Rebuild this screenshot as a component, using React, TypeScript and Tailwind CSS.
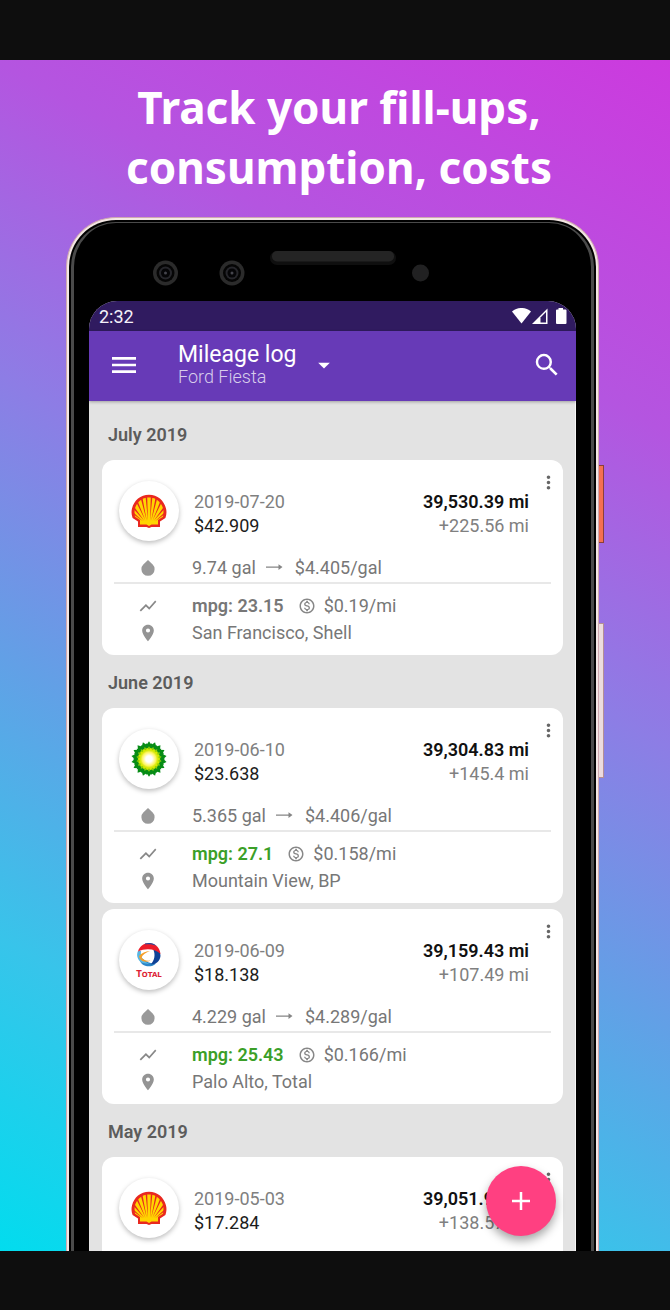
import { MdMenu, MdSearch, MdArrowDropDown, MdMoreVert, MdShowChart, MdPlace, MdOutlineMonetizationOn } from "react-icons/md";

type Brand = "shell" | "bp" | "total";

interface Details {
  volume: string;
  unitPrice: string;
  mpg: string;
  improved: boolean;
  perMile: string;
  place: string;
}

interface FillUp {
  brand: Brand;
  date: string;
  cost: string;
  odometer: string;
  distance: string;
  details?: Details;
}

const months: { label: string; entries: FillUp[] }[] = [
  {
    label: "July 2019",
    entries: [
      {
        brand: "shell", date: "2019-07-20", cost: "$42.909", odometer: "39,530.39 mi", distance: "+225.56 mi",
        details: { volume: "9.74 gal", unitPrice: "$4.405/gal", mpg: "mpg: 23.15", improved: false, perMile: "$0.19/mi", place: "San Francisco, Shell" },
      },
    ],
  },
  {
    label: "June 2019",
    entries: [
      {
        brand: "bp", date: "2019-06-10", cost: "$23.638", odometer: "39,304.83 mi", distance: "+145.4 mi",
        details: { volume: "5.365 gal", unitPrice: "$4.406/gal", mpg: "mpg: 27.1", improved: true, perMile: "$0.158/mi", place: "Mountain View, BP" },
      },
      {
        brand: "total", date: "2019-06-09", cost: "$18.138", odometer: "39,159.43 mi", distance: "+107.49 mi",
        details: { volume: "4.229 gal", unitPrice: "$4.289/gal", mpg: "mpg: 25.43", improved: true, perMile: "$0.166/mi", place: "Palo Alto, Total" },
      },
    ],
  },
  {
    label: "May 2019",
    entries: [
      { brand: "shell", date: "2019-05-03", cost: "$17.284", odometer: "39,051.94 mi", distance: "+138.57 mi" },
    ],
  },
];

function ShellLogo() {
  return (
    <svg viewBox="0 0 36 34" className="h-[34px] w-9" aria-label="Shell" role="img">
      <path d="M7 33V27.5L1.6 24C.4 20.5.2 17.5 1 14.5 3 6.5 9.5.8 18 .8S33 6.5 35 14.5C35.8 17.5 35.6 20.5 34.4 24L29 27.5V33H20.5L18 34 15.5 33Z" fill="#e9281f" />
      <path d="M9 30.500V26L4 22.700C3 18 3.500 14 5.500 10.800 8.300 6.200 12.500 3.500 18 3.500S27.700 6.200 30.500 10.800C32.500 14 33 18 32 22.700L27 26V30.500H20.500L18 32 15.500 30.500Z" fill="#ffd500" />
      <g fill="#e9281f">
        <path d="M17 27 14.600 3H16.200ZM19 27 21.400 3H19.800Z" />
        <path d="M15.800 27 10 5.200 11.600 4.500ZM20.200 27 26 5.200 24.400 4.500Z" />
        <path d="M14.600 27 5.900 9.500 7 8ZM21.400 27 30.100 9.500 29 8Z" />
        <path d="M13.400 27 3 15.500 3.700 13.500ZM22.600 27 33 15.500 32.300 13.500Z" />
        <path d="M12 27.200 3 20.800V19ZM24 27.200 33 20.800V19Z" />
      </g>
    </svg>
  );
}

function Petals({ radius, width, fill, turn }: { radius: number; width: number; fill: string; turn: number }) {
  return (
    <g fill={fill}>
      {Array.from({ length: 18 }, (_, i) => (
        <path key={i} transform={`rotate(${i * 20 + turn})`} d={`M0 0L${-width} ${-radius * 0.76}L0 ${-radius}L${width} ${-radius * 0.76}Z`} />
      ))}
    </g>
  );
}

function BpLogo() {
  return (
    <svg viewBox="-18 -18 36 36" className="size-9" aria-label="BP" role="img">
      <defs>
        <radialGradient id="bp-core">
          <stop offset="0.35" stopColor="#fff" />
          <stop offset="1" stopColor="#fff" stopOpacity="0" />
        </radialGradient>
      </defs>
      <Petals radius={17.8} width={2.9} fill="#078c16" turn={0} />
      <Petals radius={16} width={2.8} fill="#078c16" turn={10} />
      <Petals radius={12.8} width={2.1} fill="#8ccb08" turn={0} />
      <Petals radius={11.5} width={1.9} fill="#d9e900" turn={10} />
      <circle r="7.500" fill="#fff000" />
      <circle r="9" fill="url(#bp-core)" />
    </svg>
  );
}

function TotalLogo() {
  return (
    <svg viewBox="0 0 30 36" className="h-9 w-[30px] overflow-visible" aria-label="Total" role="img">
      <path d="M6 19C8 24.500 17 26.500 22 21.500 18 22 12 20.500 8.500 16.500Z" fill="#2b86c8" />
      <path d="M4 9C2 13 3.500 18 7.500 20.500 10 21.500 13 22 15 21.500 9.500 19.500 6 15 7 9Z" fill="#58b6e3" />
      <path d="M19.500 8C21.500 13 20.500 18.500 16.500 22.500 22 22.500 26 19 26.500 14 26.500 11 25 8.500 23 7Z" fill="#0f4297" />
      <path d="M4 9.500C5.500 4 11 .5 17 1.200 22 2 26 6 26.500 12 22 7 12 5.500 4 9.500Z" fill="#ec1c2a" />
      <path d="M11 1.500C15 .3 20 .8 22.500 4 19 2 15 1.800 11 2.500Z" fill="#1d4fa3" />
      <path d="M5 14C7.500 11 11.500 9.200 16 9 12 10.500 8.500 12.500 7.500 15.500 9 18 12 19 16.500 18.500 12 20.800 6 20 5 14Z" fill="#f5a02a" />
      <text x="15" y="35" textAnchor="middle" fontFamily="DejaVu Sans, sans-serif" fontWeight="700" fontSize="7" fill="#dd1f35">
        <tspan fontSize="8">T</tspan>OTAL
      </text>
    </svg>
  );
}

function BrandLogo({ brand }: { brand: Brand }) {
  if (brand === "shell") return <ShellLogo />;
  if (brand === "bp") return <BpLogo />;
  return <TotalLogo />;
}

function DropIcon() {
  return (
    <svg viewBox="0 0 14 16" className="h-4 w-3.5 fill-[#999999]" aria-hidden="true">
      <path d="M7 0 2.300 4.600A6.600 6.600 0 1 0 11.700 4.600Z" />
    </svg>
  );
}

function ArrowIcon() {
  return (
    <svg viewBox="0 0 17 8" className="h-2 w-[17px]" fill="#858585" aria-hidden="true">
      <path d="M0 2.400H13V3.800H0ZM12.500 .3 16.500 3.100 12.500 5.900Z" />
    </svg>
  );
}

function EntryDetails({ details }: { details: Details }) {
  return (
    <>
      <div className="mx-3 mt-[13px] border-b-2 border-[#e8e8e8] text-[#777777]">
        <div className="flex h-7 items-center">
          <span className="flex w-[68px] justify-center"><DropIcon /></span>
          <span className="ml-2.5">{details.volume}</span>
          <span className="mr-3 ml-2.5"><ArrowIcon /></span>
          <span>{details.unitPrice}</span>
        </div>
      </div>
      <div className="mx-3 mt-2 text-[#777777]">
        <div className="flex h-[27px] items-center">
          <span className="flex w-[68px] justify-center"><MdShowChart size={20} className="text-[#888888]" /></span>
          <span className={details.improved ? "ml-2.5 font-semibold text-[#3b9f28]" : "ml-2.5 font-semibold"}>{details.mpg}</span>
          <MdOutlineMonetizationOn size={18} className="mr-2 ml-[14px] text-[#888888]" />
          <span>{details.perMile}</span>
        </div>
        <div className="flex h-7 items-center">
          <span className="flex w-[68px] justify-center"><MdPlace size={20} className="text-[#949494]" /></span>
          <span className="ml-2.5">{details.place}</span>
        </div>
      </div>
    </>
  );
}

function EntryCard({ entry }: { entry: FillUp }) {
  return (
    <article className="relative min-h-28 rounded-xl bg-white pt-[21px] pb-2">
      <button type="button" aria-label="More options" className="absolute top-3 right-1 text-[#666666]">
        <MdMoreVert size={21} />
      </button>
      <div className="flex h-[60px] items-center pr-[34px] pl-[17px]">
        <div className="flex size-[60px] shrink-0 items-center justify-center rounded-full bg-white shadow-[0_2px_5px_rgba(0,0,0,0.26)]">
          <BrandLogo brand={entry.brand} />
        </div>
        <div className="ml-[15px] flex-1 pt-[5px] leading-6">
          <p className="text-[#808080]">{entry.date}</p>
          <p className="text-[#1c1c1c]">{entry.cost}</p>
        </div>
        <div className="pt-[5px] text-right leading-6">
          <p className="font-semibold text-[#111111]">{entry.odometer}</p>
          <p className="text-[#808080]">{entry.distance}</p>
        </div>
      </div>
      {entry.details && <EntryDetails details={entry.details} />}
    </article>
  );
}

function Lens({ x }: { x: number }) {
  return (
    <g transform={`translate(${x} 50)`}>
      <circle r="12.500" fill="#2b2b2b" />
      <circle r="9" fill="#050505" />
      <circle r="6.500" fill="#26262b" />
      <circle r="4.500" fill="#050507" />
      <circle r="1.500" fill="#45454d" />
    </g>
  );
}

function Bezel() {
  return (
    <svg viewBox="0 0 487 78" className="block w-full" aria-hidden="true">
      <rect x="181" y="28" width="126" height="14" rx="7" fill="#0f0f0f" />
      <rect x="183" y="28" width="122" height="10.500" rx="5" fill="#242424" />
      <Lens x={76.5} />
      <Lens x={143} />
      <circle cx="331.500" cy="50" r="8.500" fill="#212122" />
    </svg>
  );
}

function StatusBar() {
  return (
    <div className="flex h-[30px] items-center justify-between bg-[#301b60] pt-0.5 pr-[9px] pl-[10px] text-lg text-[#f4f1fa]">
      <span>2:32</span>
      <svg viewBox="0 0 56 18" className="h-[18px] w-14" fill="#fff" aria-hidden="true">
        <path d="M1 3.500C6.500-1.200 14.500-1.200 20 3.500L10.500 15.500Z" />
        <path d="M21 16 36.500 .5V16Z" />
        <path d="M29.500 9.500 35 4V14.500H29.500Z" fill="#301b60" />
      <path d="M47.500 0H52V1.500H54.500Q55.500 1.500 55.500 2.500V15Q55.500 16 54.500 16H46Q45 16 45 15V2.500Q45 1.500 46 1.500H47.500Z" />
      </svg>
    </div>
  );
}

function AppBar() {
  return (
    <header className="relative z-10 flex h-[70px] items-center bg-[#673ab7] pr-[14px] pb-0.5 pl-[19px] text-white shadow-[0_1px_3px_rgba(0,0,0,0.3)]">
      <button type="button" aria-label="Open menu"><MdMenu size={32} /></button>
      <div className="ml-[38px]">
        <h2 className="text-[23px] leading-6">Mileage log</h2>
        <p className="text-lg leading-5 font-light text-[#d8cdec]">Ford Fiesta</p>
      </div>
      <button type="button" aria-label="Choose vehicle" className="ml-[14px]"><MdArrowDropDown size={28} /></button>
      <button type="button" aria-label="Search" className="ml-auto"><MdSearch size={30} /></button>
    </header>
  );
}

export default function App() {
  return (
    <div className="flex h-screen flex-col bg-[#0e0e0e] pt-[60px] pb-[59px] font-[Roboto,sans-serif]">
      <main className="flex min-h-0 flex-1 flex-col overflow-hidden bg-[linear-gradient(29deg,#02dcee_0%,#38c4ea_20%,#62a0e6_38%,#8d7de5_56%,#b455e0_76%,#cc3ade_100%)]">
        <h1 className="h-[157px] pt-[17px] pl-2 text-center font-['Noto_Sans',sans-serif] text-[44px] leading-[60px] font-bold text-white">
          Track your fill-ups,
          <br />
          consumption, costs
        </h1>
        <div className="flex min-h-0 flex-1 pr-[66px] pl-[66px]">
          <div className="flex min-w-0 flex-1 flex-col rounded-t-[50px] border border-b-0 border-[#cfa9b0] bg-[#f4e7e5] px-0.5 pt-0.5">
            <div className="flex min-h-0 flex-1 flex-col rounded-t-[47px] bg-black px-0.5 pt-0.5">
              <div className="flex min-h-0 flex-1 flex-col rounded-t-[45px] border-x-[3px] border-t border-[#4a4a4a] bg-black px-[15px]">
                <Bezel />
                <div className="relative flex min-h-0 flex-1 flex-col overflow-hidden rounded-t-[28px] bg-[#e3e3e3]">
                  <StatusBar />
                  <AppBar />
                  <div className="min-h-0 flex-1 overflow-hidden border-r border-[#f7f7f7] pt-1.5 pr-3 pl-[13px] text-lg">
                    {months.map((month) => (
                      <section key={month.label}>
                        <h3 className="h-[53px] pl-1.5 leading-[55px] font-semibold text-[#5c5c5c]">{month.label}</h3>
                        <div className="flex flex-col gap-1.5">
                          {month.entries.map((entry) => (
                            <EntryCard key={entry.date} entry={entry} />
                          ))}
                        </div>
                      </section>
                    ))}
                  </div>
                  <button type="button" aria-label="Add fill-up" className="absolute right-5 bottom-[15px] flex size-[70px] items-center justify-center rounded-full bg-[#ff4081] shadow-[0_5px_10px_rgba(0,0,0,0.35)]">
                    <svg viewBox="0 0 18 18" className="size-[18px]" stroke="#fff" strokeWidth="2.500" aria-hidden="true">
                      <path d="M9 0V18M0 9H18" />
                    </svg>
                  </button>
                </div>
              </div>
            </div>
          </div>
          <div className="flex w-[5px] shrink-0 flex-col pt-[248px]">
            <div className="h-[78px] border border-l-0 border-[#8c4038] bg-[#f56f52]" />
            <div className="mt-20 h-[155px] border border-l-0 border-[#b48f94] bg-[#ecdcde]" />
          </div>
        </div>
      </main>
    </div>
  );
}
